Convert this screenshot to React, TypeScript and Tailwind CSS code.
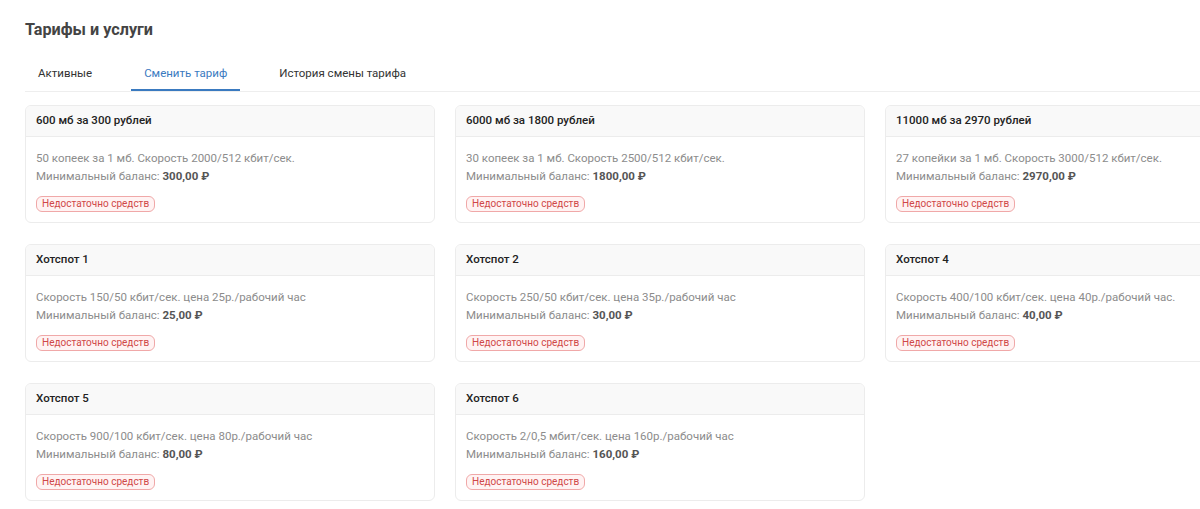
const tariffs = [
	{ title: "600 мб за 300 рублей", desc: "50 копеек за 1 мб. Скорость 2000/512 кбит/сек.", min: "300,00 ₽" },
	{ title: "6000 мб за 1800 рублей", desc: "30 копеек за 1 мб. Скорость 2500/512 кбит/сек.", min: "1800,00 ₽" },
	{ title: "11000 мб за 2970 рублей", desc: "27 копейки за 1 мб. Скорость 3000/512 кбит/сек.", min: "2970,00 ₽" },
	{ title: "Хотспот 1", desc: "Скорость 150/50 кбит/сек. цена 25р./рабочий час", min: "25,00 ₽" },
	{ title: "Хотспот 2", desc: "Скорость 250/50 кбит/сек. цена 35р./рабочий час", min: "30,00 ₽" },
	{ title: "Хотспот 4", desc: "Скорость 400/100 кбит/сек. цена 40р./рабочий час.", min: "40,00 ₽" },
	{ title: "Хотспот 5", desc: "Скорость 900/100 кбит/сек. цена 80р./рабочий час", min: "80,00 ₽" },
	{ title: "Хотспот 6", desc: "Скорость 2/0,5 мбит/сек. цена 160р./рабочий час", min: "160,00 ₽" },
];

const tabs = ["Активные", "Сменить тариф", "История смены тарифа"];

export default function App() {
	return (
		<div className="w-[1200px] h-[509px] overflow-hidden bg-white font-['Roboto','Liberation_Sans',sans-serif]">
			<div className="pl-[25px] pt-[19px] w-[1300px]">
				<h1 className="text-[16.2px] font-bold text-[#444] leading-[22px]">Тарифы и услуги</h1>

				{/* вкладки */}
				<div className="mt-[18px] flex border-b border-[#eeeeee] text-[11.5px]">
					{tabs.map((t, i) => (
						<div
							key={t}
							className={
								i === 1
									? "px-[13px] h-[32px] leading-[28px] text-[#3a7ac0] border-b-2 border-[#3a7ac0] mb-[-1px] mr-[25px]"
									: i === 0
									? "px-[13px] h-[32px] leading-[28px] text-[#333] mr-[26px]"
									: "px-[14px] h-[32px] leading-[28px] text-[#333]"
							}
						>
							{t}
						</div>
					))}
				</div>

				<div className="mt-[13px] grid grid-cols-[repeat(3,410px)] gap-x-[20px] gap-y-[21px]">
					{tariffs.map((t) => (
						<div key={t.title} className="rounded-md border border-[#ececec] bg-white h-[118px] overflow-hidden">
							<div className="h-[31px] bg-[#f9f9f9] border-b border-[#ececec] px-[10px] flex items-center text-[11.5px] font-medium text-[#222]">
								{t.title}
							</div>
							<div className="px-[10px] pt-[12px] text-[11.5px] text-[#8c8c8c] leading-[18px]">
								<div>{t.desc}</div>
								<div>
									Минимальный баланс: <b className="font-bold text-[#555]">{t.min}</b>
								</div>
								<div className="mt-[11px] w-fit rounded-md border border-[#f0a8a8] bg-[#fff3f3] px-[5px] text-[10px] leading-[14px] text-[#d04848]">
									Недостаточно средств
								</div>
							</div>
						</div>
					))}
				</div>
			</div>
		</div>
	);
}
